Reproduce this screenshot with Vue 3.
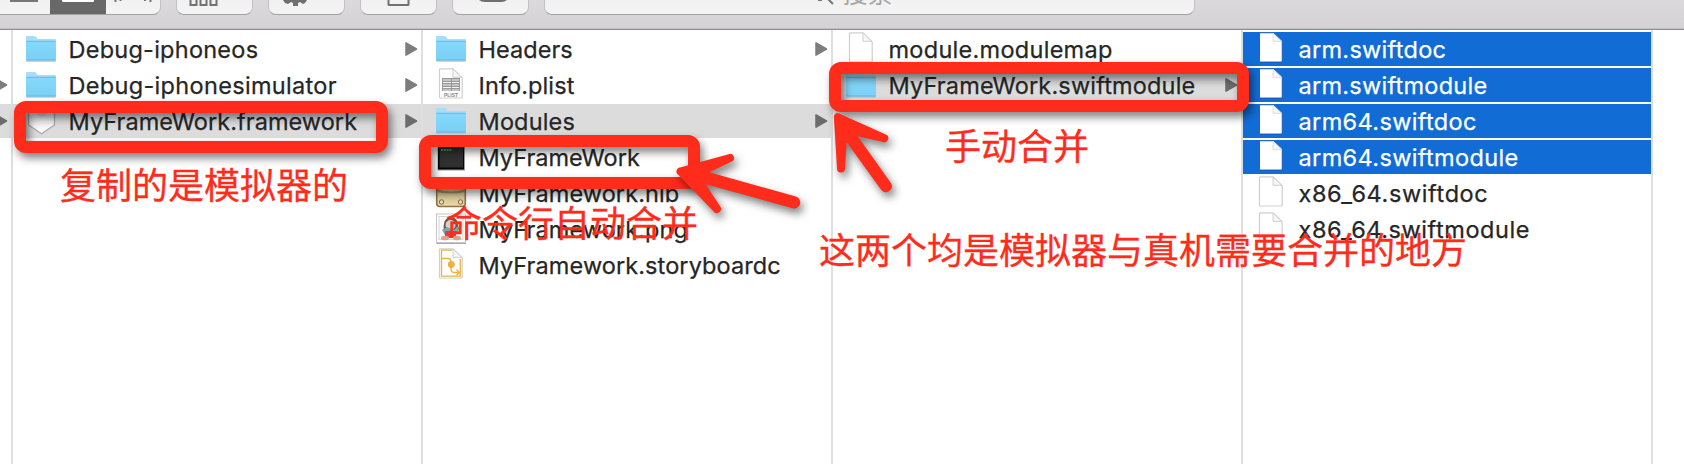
<script setup>
const columns = [
  {
    name: 'parent',
    rows: [
      { blank: true },
      { blank: true, arrow: true },
      { blank: true, arrow: true, state: 'path' },
    ],
  },
  {
    name: 'products',
    rows: [
      { label: 'Debug-iphoneos', icon: 'folder', arrow: true, tracking: 0.25 },
      { label: 'Debug-iphonesimulator', icon: 'folder', arrow: true, tracking: 0.32 },
      { label: 'MyFrameWork.framework', icon: 'framework', arrow: true, state: 'path', tracking: 0.05 },
    ],
  },
  {
    name: 'framework',
    rows: [
      { label: 'Headers', icon: 'folder', arrow: true, tracking: 0.05 },
      { label: 'Info.plist', icon: 'plist', tracking: 0.1 },
      { label: 'Modules', icon: 'folder', arrow: true, state: 'path', tracking: 0.15 },
      { label: 'MyFrameWork', icon: 'exec', tracking: 0.02 },
      { label: 'MyFramework.nib', icon: 'nib', tracking: 0.08 },
      { label: 'MyFramework.png', icon: 'png', tracking: 0.08 },
      { label: 'MyFramework.storyboardc', icon: 'storyboard', tracking: 0.09 },
    ],
  },
  {
    name: 'modules',
    rows: [
      { label: 'module.modulemap', icon: 'doc', tracking: 0.28 },
      { label: 'MyFrameWork.swiftmodule', icon: 'folder', arrow: true, state: 'path', tracking: 0.16 },
    ],
  },
  {
    name: 'swiftmodule',
    rows: [
      { label: 'arm.swiftdoc', icon: 'doc', state: 'selected', tracking: 0.28 },
      { label: 'arm.swiftmodule', icon: 'doc', state: 'selected', tracking: 0.26 },
      { label: 'arm64.swiftdoc', icon: 'doc', state: 'selected', tracking: 0.36 },
      { label: 'arm64.swiftmodule', icon: 'doc', state: 'selected', tracking: 0.36 },
      { label: 'x86_64.swiftdoc', icon: 'doc', tracking: 0.6 },
      { label: 'x86_64.swiftmodule', icon: 'doc', tracking: 0.55 },
    ],
  },
]
</script>

<template>
  <div class="finder">
    <header class="toolbar">
      <div class="btn views">
        <span class="seg list"><i></i></span>
        <span class="seg active"><i></i></span>
        <span class="seg flow">
          <svg width="54" height="14" viewBox="0 0 54 14">
            <path d="M9.5 0v2M14.5 0v1M39 0v1M44.500 0v2" stroke="#747474" stroke-width="2" />
          </svg>
        </span>
      </div>
      <div class="btn">
        <svg width="75" height="14" viewBox="0 0 75 14" fill="none" stroke="#717171" stroke-width="2">
          <path d="M13.500-3v8h6v-8M23.500-3v8h6v-8M33.500-3v8h6v-8" />
        </svg>
      </div>
      <div class="btn">
        <svg width="75" height="14" viewBox="0 0 75 14">
          <path d="M14 0h24l-2 3-2 1-3-2-2 1v3h-5V3l-2-1-3 2-3-1z" fill="#6f6f6f" />
        </svg>
      </div>
      <div class="btn">
        <svg width="75" height="14" viewBox="0 0 75 14" fill="none" stroke="#717171" stroke-width="2">
          <path d="M27.500-2v6.500q0 .5.5.5h19q.5 0 .5-.5V-2" />
        </svg>
      </div>
      <div class="btn">
        <svg width="75" height="14" viewBox="0 0 75 14">
          <path d="M26 0h28q-2 2-6 2H32q-4 0-6-2z" fill="#6f6f6f" />
        </svg>
      </div>
      <div class="btn search">
        <svg width="20" height="14" viewBox="0 0 20 14" fill="none" stroke="#777" stroke-width="2">
          <path d="M0 0h4M10-1l5 5" />
        </svg>
        <span>搜索</span>
      </div>
    </header>

    <main class="browser">
      <section v-for="col in columns" :key="col.name" class="column" :class="col.name">
        <div v-for="(row, i) in col.rows" :key="i" class="row" :class="row.state">
          <span class="icon">
            <svg v-if="row.icon === 'folder'" width="34" height="34" viewBox="0 0 34 34">
              <path d="M2 28h30v1q0 1-1 1H3q-1 0-1-1z" fill="#b9c3c8" opacity=".7" />
              <path d="M2 9V5q0-1 1-1h7.500q1 0 1.600.8L13.500 7H31q1 0 1 1v2H2z" fill="#a4def9" />
              <path d="M2 9h30v18.500q0 1-1 1H3q-1 0-1-1z" fill="url(#folderFill)" />
              <path d="M2.500 9.300h29M2.500 28h29" stroke="#62b5dc" stroke-width=".9" />
            </svg>
            <svg v-else-if="row.icon === 'framework'" width="34" height="34" viewBox="0 0 34 34">
              <path d="M5 3h24l1.500 4v14L17.500 29.800 4.500 21V7z" fill="url(#shieldFill)" stroke="#a9a9a9" stroke-width="1.300" />
              <path d="M12 9q6 7 12 0" fill="#d5d5d5" />
            </svg>
            <svg v-else-if="row.icon === 'exec'" width="34" height="34" viewBox="0 0 34 34">
              <rect x="3.500" y="2" width="27.500" height="28.500" fill="#9c9c9c" />
              <rect x="4" y="2" width="26" height="27.500" fill="#050505" />
              <rect x="5.500" y="3" width="23.500" height="24.500" fill="#303030" />
              <path d="M7 10h11" stroke="#2ca84f" stroke-width="2" stroke-dasharray="2 .8" />
            </svg>
            <svg v-else-if="row.icon === 'nib'" width="34" height="34" viewBox="0 0 34 34">
              <rect x="2.700" y="3" width="28.600" height="27.500" rx="3" fill="url(#nibFill)" stroke="#8d7448" stroke-width="1.600" />
              <path d="M3 13q14 5 28 0v3q-14 3-28 0z" fill="#a6936b" />
              <g fill="#e8dfc8" stroke="#7b6a45"><circle cx="7.500" cy="26" r="2.200" /><circle cx="26.500" cy="26" r="2.200" /></g>
            </svg>
            <svg v-else-if="row.icon === 'png'" width="34" height="34" viewBox="0 0 34 34">
              <rect x="2.500" y="2.500" width="29.500" height="29.500" fill="#aaa" />
              <rect x="2.500" y="2" width="29" height="28.500" fill="#fff" stroke="#c6c6c6" />
              <rect x="5" y="4.500" width="24" height="23" fill="#fafafa" stroke="#ccc" stroke-width=".8" />
              <path d="M10 20q-2-14 7-15 8 1 7 10l-3 5z" fill="#725149" />
              <circle cx="16.500" cy="13" r="5" fill="#d9d0cb" />
              <path d="M8 18l5-3 7 3 4-4 2 2-4 7H11z" fill="#71a8b9" />
              <path d="M11 19h11v7H11z" fill="#e93a3c" />
              <ellipse cx="11" cy="26" rx="4" ry="2.300" fill="#d9a38c" />
              <ellipse cx="23" cy="26" rx="4" ry="2.300" fill="#d9a38c" />
            </svg>
            <svg v-else-if="row.icon" width="34" height="34" viewBox="0 0 34 34">
              <path class="sheet" d="M6 .8h13L28.200 10v19q0 1-1 1H6.500q-1 0-1-1V1.800q0-1 .5-1z" />
              <path class="fold" d="M19 1v8.300h8.800z" />
              <g v-if="row.icon === 'plist'">
                <path d="M8 10h18v13H8z" fill="#999" />
                <path d="M9 12h8M18 12h7M9 14.500h8M18 14.500h7M9 17h8M18 17h7M9 19.500h8M18 19.500h7M9 22h8M18 22h7" stroke="#f2f2f2" stroke-width="1.100" />
                <text x="17" y="28.600" text-anchor="middle" class="plist-text">PLIST</text>
              </g>
              <g v-if="row.icon === 'storyboard'" fill="none" stroke="#edb23d" stroke-width="1.300">
                <path d="M18 2.200H7.500v26h18.800V11" />
                <path d="M8 10.500h6q3 0 3 3v7q0 4 3 4h5M22.500 21.500l3 3-3 3" />
                <circle cx="17.300" cy="16.500" r="2.800" fill="#edb23d" />
              </g>
            </svg>
          </span>
          <span class="label" :style="{ letterSpacing: (row.tracking || 0) + 'px' }">{{ row.label }}</span>
          <svg v-if="row.arrow" class="disclosure" width="13" height="14" viewBox="0 0 13 14">
            <path d="M1 .8v12.400L11.500 7z" stroke-width="1.500" stroke-linejoin="round" />
          </svg>
        </div>
      </section>
    </main>

    <svg class="marks" width="1684" height="464" viewBox="0 0 1684 464">
      <defs>
        <linearGradient id="folderFill" x1="0" y1="0" x2="0" y2="1">
          <stop offset="0" stop-color="#86d9fb" /><stop offset="1" stop-color="#7bd0f5" />
        </linearGradient>
        <linearGradient id="shieldFill" x1="0" y1="0" x2="0" y2="1">
          <stop offset="0" stop-color="#d8d8d8" /><stop offset="1" stop-color="#fff" />
        </linearGradient>
        <linearGradient id="nibFill" x1="0" y1="0" x2="0" y2="1">
          <stop offset="0" stop-color="#c9b98e" /><stop offset="1" stop-color="#ead7a1" />
        </linearGradient>
      </defs>
      <g class="frames">
        <path fill-rule="evenodd" d="M26 101H376a12 12 0 0 1 12 12V141a12 12 0 0 1-12 12H26a12 12 0 0 1-12-12V113a12 12 0 0 1 12-12zM26 113V141H376V113z" />
        <path fill-rule="evenodd" d="M431 135H688a12 12 0 0 1 12 12V177a12 12 0 0 1-12 12H431a12 12 0 0 1-12-12V147a12 12 0 0 1 12-12zM431 147V177H688V147z" />
        <path fill-rule="evenodd" d="M841 62H1237a12 12 0 0 1 12 12V100a12 12 0 0 1-12 12H841a12 12 0 0 1-12-12V74a12 12 0 0 1 12-12zM841 74V100H1237V74z" />
        <path d="M680 167.500L728.700 154.200A4 4 0 0 1 731.400 161.800L709.300 172.300L795.800 196.500A6 6 0 0 1 792.500 208.200L705.700 184.300L720.200 206.600A4 4 0 0 1 713.700 211.500L678.500 175A4 4 0 0 1 680 167.500z" />
        <path d="M838.500 113.200L885.800 134.600A4 4 0 0 1 882.700 142L857.700 136.300L891.200 183.400A6 6 0 0 1 881.300 190L846.700 142.300L845 168.500A4 4 0 0 1 837 168.300L833.800 116.500A4 4 0 0 1 838.500 113.200z" />
      </g>
    </svg>
    <p class="note n1">复制的是模拟器的</p>
    <p class="note n2">命令行自动合并</p>
    <p class="note n3">手动合并</p>
    <p class="note n4">这两个均是模拟器与真机需要合并的地方</p>
  </div>
</template>

<style>
html, body { margin: 0; overflow: hidden; }
</style>

<style scoped>
.finder {
  position: relative;
  width: 1684px;
  height: 464px;
  overflow: hidden;
  background: #fff;
  font-family: Inter, "Noto Sans CJK SC", sans-serif;
  color: #262626;
}
.toolbar {
  box-sizing: border-box;
  height: 30px;
  display: flex;
  align-items: flex-start;
  gap: 15px;
  background: linear-gradient(#dbd9dc, #d4d2d5);
  border-bottom: 1px solid #8f8d90;
  box-shadow: inset 0 -1px #c2c0c3;
}
.btn {
  box-sizing: border-box;
  width: 77px;
  height: 15px;
  flex: none;
  overflow: hidden;
  background: linear-gradient(#f1f1f1, #f4f4f4);
  border: 1px solid #c2c0c3;
  border-top: 0;
  border-bottom-color: #a3a1a4;
  border-radius: 0 0 8px 8px;
}
.btn svg { display: block; }
.btn.views { width: 160.500px; display: flex; border-left: 0; border-bottom-left-radius: 0; }
.seg { height: 15px; display: flex; justify-content: center; }
.seg.list { width: 51px; }
.seg.list i { width: 28px; height: 2px; background: #777; margin-left: -3px; }
.seg.active { width: 56px; background: #686868; }
.seg.active i { width: 32px; height: 2px; background: #fff; border-radius: 0 0 1px 1px; }
.search { width: 651px; display: flex; padding-left: 273px; font-size: 25px; line-height: 25px; color: #a5a5a5; gap: 5px; }
.search span { margin-top: -18px; }
.browser { display: flex; height: 434px; }
.column {
  box-sizing: border-box;
  width: 410px;
  flex: none;
  padding-top: 2px;
  border-right: 2px solid #dfdfdf;
  display: flex;
  flex-direction: column;
  gap: 2px;
}
.column.parent { width: 13px; align-items: flex-end; }
.column.parent .row { width: 408px; justify-content: flex-end; }
.row {
  box-sizing: border-box;
  height: 34px;
  flex: none;
  display: flex;
  align-items: center;
  padding: 0 3px 0 11px;
}
.row.path { background: #dcdcdc; }
.row.selected { background: #116cd6; color: #fff; }
.icon { width: 34px; height: 34px; flex: none; }
.icon svg { display: block; }
.sheet { fill: #fff; stroke: #cfcfcf; stroke-width: 1.200; }
.fold { fill: #f7f7f7; stroke: #cfcfcf; stroke-width: 1; }
.selected .sheet { stroke: #0d51a5; stroke-width: .8; }
.selected .fold { stroke: #dedede; }
.plist-text { font: bold 5px "Liberation Sans", sans-serif; fill: #888; }
.label {
  flex: 1;
  padding: 2px 0 0 10.500px;
  font-size: 23.500px;
  line-height: 34px;
  white-space: nowrap;
  -webkit-text-stroke: .25px currentColor;
}
.disclosure { flex: none; margin-top: -1px; fill: #7d7d7d; stroke: #7d7d7d; }
.path .disclosure { fill: #6c6c6c; stroke: #6c6c6c; }
.marks { position: absolute; left: 0; top: 0; }
.frames path { fill: #ff2b1b; filter: drop-shadow(3px 5px 4px rgba(0, 0, 0, .5)); }
.note {
  position: absolute;
  margin: 0;
  font: 36px/44px "Noto Sans CJK SC", sans-serif;
  color: #ff2b1b;
  white-space: nowrap;
  -webkit-text-stroke: .3px currentColor;
}
.n1 { left: 60px; top: 161px; }
.n2 { left: 446px; top: 199px; }
.n3 { left: 945px; top: 122px; }
.n4 { left: 819px; top: 226px; }
</style>
